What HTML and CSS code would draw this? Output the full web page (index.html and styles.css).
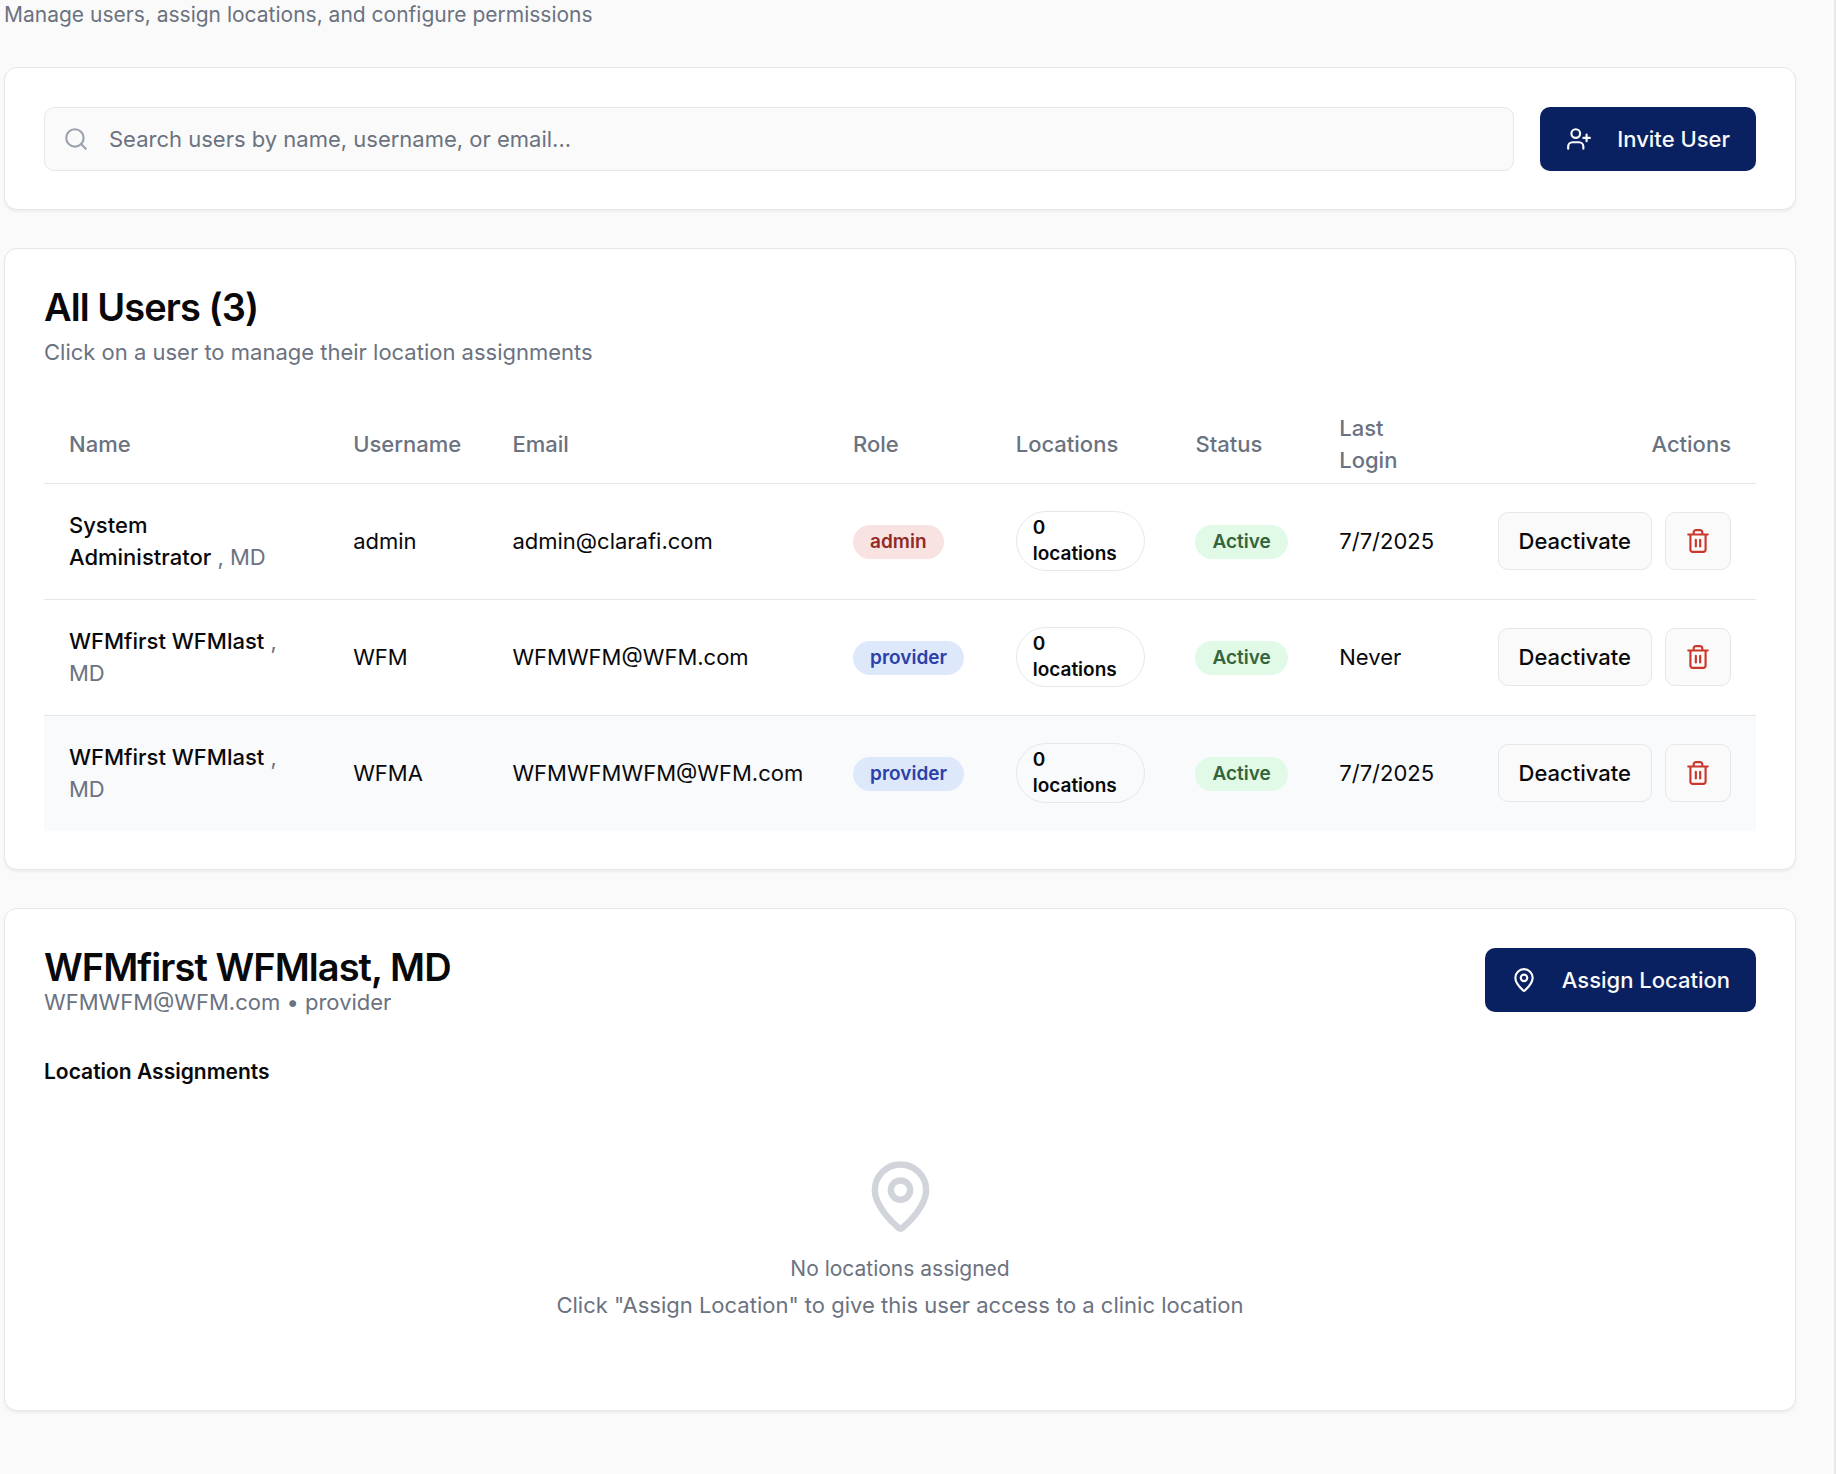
FILE: index.html
```html
<!DOCTYPE html>
<html lang="en">
<head>
  <meta charset="utf-8">
  <meta name="viewport" content="width=device-width, initial-scale=1">
  <title>User Management</title>
  <link rel="stylesheet" href="styles.css">
</head>
<body>
  <svg class="sprite" aria-hidden="true">
    <symbol id="icon-search" viewBox="0 0 24 24"><circle cx="11" cy="11" r="8"/><path d="m21 21-4.3-4.3"/></symbol>
    <symbol id="icon-user-plus" viewBox="0 0 24 24"><path d="M16 21v-2a4 4 0 0 0-4-4H6a4 4 0 0 0-4 4v2"/><circle cx="9" cy="7" r="4"/><path d="M19 8v6M22 11h-6"/></symbol>
    <symbol id="icon-pin" viewBox="0 0 24 24"><path d="M20 10c0 4.993-5.539 10.193-7.399 11.799a1 1 0 0 1-1.202 0C9.539 20.193 4 14.993 4 10a8 8 0 0 1 16 0"/><circle cx="12" cy="10" r="3"/></symbol>
    <symbol id="icon-trash" viewBox="0 0 24 24"><path d="M3 6h18M19 6v14c0 1-1 2-2 2H7c-1 0-2-1-2-2V6M8 6V4c0-1 1-2 2-2h4c1 0 2 1 2 2v2M10 11v6M14 11v6"/></symbol>
  </svg>

  <main class="page">
    <p class="page-subtitle">Manage users, assign locations, and configure permissions</p>

    <section class="card toolbar">
      <div class="search">
        <svg class="icon search-icon" aria-hidden="true"><use href="#icon-search"/></svg>
        <input class="search-input" type="search" aria-label="Search users" placeholder="Search users by name, username, or email...">
      </div>
      <button class="button button-primary" type="button">
        <svg class="icon" aria-hidden="true"><use href="#icon-user-plus"/></svg>
        Invite User
      </button>
    </section>

    <section class="card">
      <header class="card-header">
        <h2 class="card-title">All Users (3)</h2>
        <p class="card-description spaced">Click on a user to manage their location assignments</p>
      </header>
      <table class="users">
        <colgroup>
          <col class="col-name"><col class="col-username"><col class="col-email"><col class="col-role">
          <col class="col-locations"><col class="col-status"><col class="col-login"><col class="col-actions">
        </colgroup>
        <thead>
          <tr>
            <th scope="col">Name</th>
            <th scope="col">Username</th>
            <th scope="col">Email</th>
            <th scope="col">Role</th>
            <th scope="col">Locations</th>
            <th scope="col">Status</th>
            <th scope="col">Last<br>Login</th>
            <th scope="col" class="align-end">Actions</th>
          </tr>
        </thead>
        <tbody>
          <tr>
            <td><span class="name">System</span><br><span class="name">Administrator</span> <span class="credential">, MD</span></td>
            <td>admin</td>
            <td>admin@clarafi.com</td>
            <td><span class="badge badge-admin">admin</span></td>
            <td><span class="badge badge-outline">0<br>locations</span></td>
            <td><span class="badge badge-active">Active</span></td>
            <td>7/7/2025</td>
            <td>
              <div class="row-actions">
                <button class="button button-outline" type="button">Deactivate</button>
                <button class="button button-outline button-danger" type="button" aria-label="Delete user"><svg class="icon" aria-hidden="true"><use href="#icon-trash"/></svg></button>
              </div>
            </td>
          </tr>
          <tr>
            <td><span class="name">WFMfirst WFMlast</span> <span class="credential">,</span> <span class="credential">MD</span></td>
            <td>WFM</td>
            <td>WFMWFM@WFM.com</td>
            <td><span class="badge badge-provider">provider</span></td>
            <td><span class="badge badge-outline">0<br>locations</span></td>
            <td><span class="badge badge-active">Active</span></td>
            <td>Never</td>
            <td>
              <div class="row-actions">
                <button class="button button-outline" type="button">Deactivate</button>
                <button class="button button-outline button-danger" type="button" aria-label="Delete user"><svg class="icon" aria-hidden="true"><use href="#icon-trash"/></svg></button>
              </div>
            </td>
          </tr>
          <tr class="is-highlighted">
            <td><span class="name">WFMfirst WFMlast</span> <span class="credential">,</span> <span class="credential">MD</span></td>
            <td>WFMA</td>
            <td>WFMWFMWFM@WFM.com</td>
            <td><span class="badge badge-provider">provider</span></td>
            <td><span class="badge badge-outline">0<br>locations</span></td>
            <td><span class="badge badge-active">Active</span></td>
            <td>7/7/2025</td>
            <td>
              <div class="row-actions">
                <button class="button button-outline" type="button">Deactivate</button>
                <button class="button button-outline button-danger" type="button" aria-label="Delete user"><svg class="icon" aria-hidden="true"><use href="#icon-trash"/></svg></button>
              </div>
            </td>
          </tr>
        </tbody>
      </table>
    </section>

    <section class="card">
      <header class="card-header split">
        <div>
          <h2 class="card-title">WFMfirst WFMlast, MD</h2>
          <p class="card-description">WFMWFM@WFM.com • provider</p>
        </div>
        <button class="button button-primary" type="button">
          <svg class="icon" aria-hidden="true"><use href="#icon-pin"/></svg>
          Assign Location
        </button>
      </header>
      <h3 class="section-title">Location Assignments</h3>
      <div class="empty">
        <svg class="icon empty-icon" aria-hidden="true"><use href="#icon-pin"/></svg>
        <p class="empty-title">No locations assigned</p>
        <p class="empty-text">Click "Assign Location" to give this user access to a clinic location</p>
      </div>
    </section>
  </main>
</body>
</html>
```
FILE: styles.css
```css
* {
  box-sizing: border-box;
}

body {
  margin: 0;
  min-height: 100vh;
  border-right: 2px solid #e8e8e8;
  background: #fafafa;
  color: #09090b;
  font: 400 22px/32px Inter, "Liberation Sans", sans-serif;
}

h2, h3, p {
  margin: 0;
}

.sprite {
  display: none;
}

.icon {
  flex: none;
  width: 26px;
  height: 26px;
  fill: none;
  stroke: currentColor;
  stroke-width: 2;
  stroke-linecap: round;
  stroke-linejoin: round;
}

.page {
  display: flex;
  flex-direction: column;
  gap: 38px;
  padding: 0 38px 38px 4px;
}

.page-subtitle {
  color: #6b7280;
  font-size: 21px;
  line-height: 29px;
}

.card {
  padding: 39px 39px 38px;
  border: 1px solid #e5e7eb;
  border-radius: 13px;
  background: #fff;
  box-shadow: 0 2px 3px rgb(0 0 0 / 5%);
}

.toolbar {
  display: flex;
  gap: 26px;
}

.search {
  position: relative;
  flex: 1;
}

.search-icon {
  position: absolute;
  top: 19px;
  left: 19px;
  color: #9ca3af;
}

.search-input {
  display: block;
  width: 100%;
  height: 64px;
  padding: 0 20px 0 64px;
  border: 1px solid #e5e7eb;
  border-radius: 10px;
  background: #fafafa;
  color: inherit;
  font: inherit;
}

.search-input::placeholder {
  color: #6b7280;
  opacity: 1;
}

.button {
  display: inline-flex;
  align-items: center;
  justify-content: center;
  border: 0;
  border-radius: 10px;
  font: inherit;
  font-weight: 500;
  white-space: nowrap;
  cursor: pointer;
}

.button-primary {
  gap: 25px;
  height: 64px;
  padding: 0 26px;
  background: #0a2161;
  color: #fafafa;
}

.button-outline {
  height: 58px;
  padding: 0 20px;
  border: 1px solid #e5e7eb;
  background: #fafafa;
  color: #09090b;
}

.button-danger {
  padding: 0 19px;
  color: #cb372b;
}

.card-header {
  margin-bottom: 38px;
}

.split {
  display: flex;
  align-items: flex-start;
  justify-content: space-between;
}

.card-title {
  font-size: 38px;
  font-weight: 600;
  line-height: 38px;
  letter-spacing: -0.025em;
}

.card-description {
  color: #6b7280;
}

.spaced {
  margin-top: 10px;
}

.users {
  width: 100%;
  border-collapse: collapse;
  table-layout: fixed;
}

.col-name { width: 16.6%; }
.col-username { width: 9.3%; }
.col-email { width: 19.9%; }
.col-role { width: 9.5%; }
.col-locations { width: 10.5%; }
.col-status { width: 8.4%; }
.col-login { width: 9.1%; }
.col-actions { width: 16.7%; }

.users th {
  height: 77px;
  padding: 0 25px;
  color: #6b7280;
  font-weight: 500;
  text-align: left;
}

.users .align-end {
  text-align: right;
}

.users td {
  height: 116px;
  padding: 0 25px;
}

.users tbody tr {
  border-top: 1px solid #e5e7eb;
}

.is-highlighted {
  background: #f9fafb;
}

.name {
  font-weight: 500;
}

.credential {
  color: #6b7280;
}

.badge {
  display: inline-block;
  padding: 3px 16px;
  border: 1px solid transparent;
  border-radius: 30px;
  font-size: 19px;
  font-weight: 600;
  line-height: 26px;
  vertical-align: middle;
}

.badge-admin {
  background: #f8e2e2;
  color: #912b25;
}

.badge-provider {
  background: #dde8fb;
  color: #2b41a9;
}

.badge-active {
  background: #e1f9e7;
  color: #35643a;
}

.badge-outline {
  display: block;
  border-color: #e5e7eb;
}

.row-actions {
  display: flex;
  justify-content: flex-end;
  gap: 13px;
}

.section-title {
  font-size: 21px;
  font-weight: 600;
  line-height: 32px;
}

.empty {
  display: flex;
  flex-direction: column;
  align-items: center;
  margin-top: 19px;
  padding: 51px 0;
  color: #6b7280;
  text-align: center;
}

.empty-icon {
  width: 77px;
  height: 77px;
  margin-bottom: 19px;
  color: #d1d5db;
}

.empty-title {
  margin-bottom: 6px;
  font-size: 21px;
  line-height: 29px;
}
```
